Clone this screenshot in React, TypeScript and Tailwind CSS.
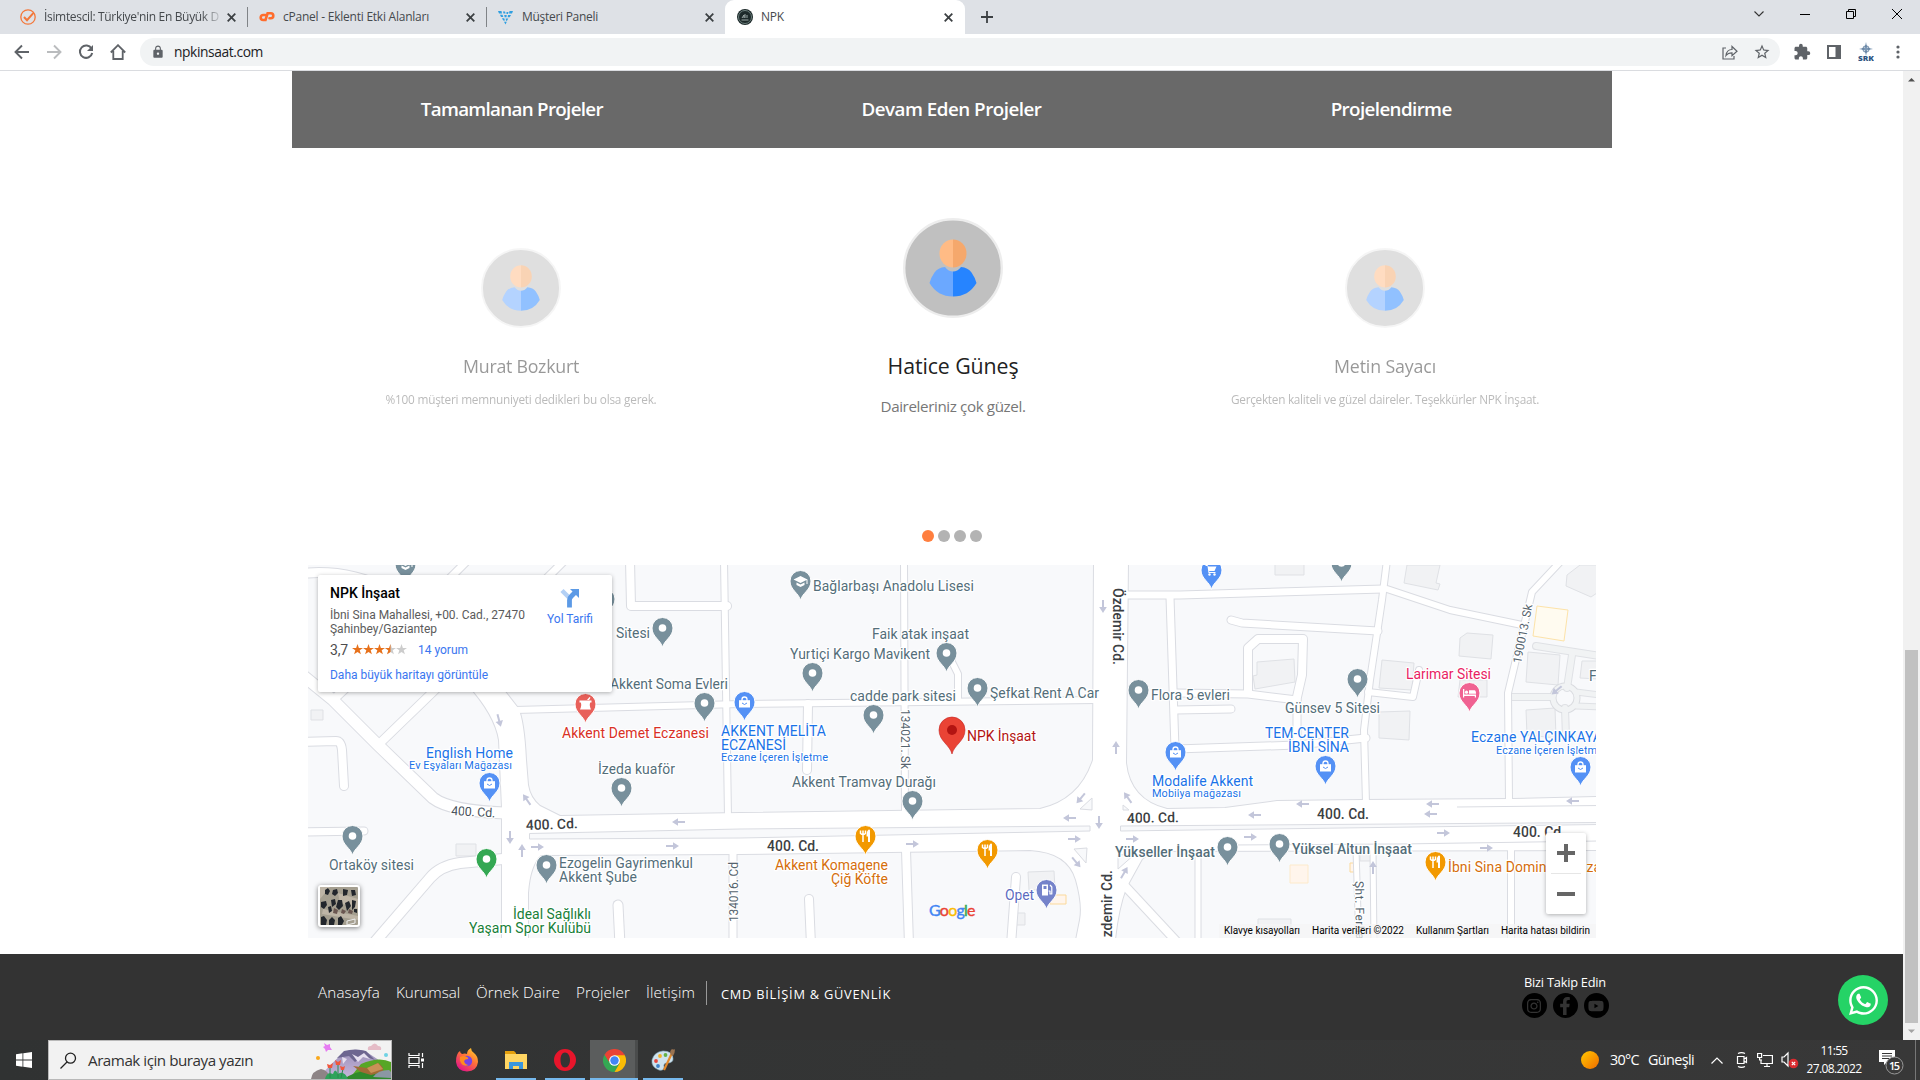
import React, { useLayoutEffect, useRef, useState } from "react";
import { FaWhatsapp, FaFacebookF, FaInstagram, FaYoutube } from "react-icons/fa";
import { MdExtension, MdLock, MdOutlineStarBorder } from "react-icons/md";

/* Text whose tracking is computed so that it fills the given width. */
function Fit({ w, className = "", children }: { w: number; className?: string; children: string }) {
  const ref = useRef<HTMLSpanElement>(null);
  const [ls, setLs] = useState(0);
  useLayoutEffect(() => {
    if (!ref.current) return;
    const natural = ref.current.getBoundingClientRect().width - ls * children.length;
    setLs((w - natural) / children.length);
  }, [w, children]);
  return (
    <span ref={ref} className={"inline-block whitespace-pre " + className} style={{ letterSpacing: ls + "px" }}>
      {children}
    </span>
  );
}

function CloseX() {
  return (
    <svg className="size-[9px] shrink-0" viewBox="0 0 9 9">
      <path d="M.7.7l7.600 7.600M8.300.7L.7 8.300" stroke="#3c4043" strokeWidth="1.800" />
    </svg>
  );
}

function TabStrip() {
  return (
    <div className="flex h-[34px] items-center bg-[#dee1e6] text-[12px] leading-[16px] text-[#45494d]">
      <div className="flex h-full w-[247px] items-center pl-5">
        <svg className="size-4 shrink-0" viewBox="0 0 16 16" fill="none" stroke="#f3773a">
          <circle cx="8" cy="8" r="7.2" strokeWidth="1.3" />
          <path d="M4 8l3 3.2 6.5-7.4" strokeWidth="2" />
        </svg>
        <div className="ml-2 w-[175px] overflow-hidden [mask-image:linear-gradient(to_right,black_90%,rgba(0,0,0,0.2))]">
          <Fit w={175} className="text-[12px]">İsimtescil: Türkiye'nin En Büyük D</Fit>
        </div>
        <div className="ml-2"><CloseX /></div>
      </div>
      <div className="h-5 w-px bg-[#808387]" />
      <div className="flex h-full w-[238px] items-center pl-[11px]">
        <svg className="size-4" viewBox="0 0 16 16" fill="none" stroke="#ff6c2c" strokeWidth="2.600" strokeLinecap="round">
          <path d="M6.300 6H4.200a2.400 2.400 0 0 0 0 5h2.300L8.600 4.300h3.200a2.400 2.400 0 0 1 0 5h-1.300" />
        </svg>
        <div className="ml-2 w-[183px]"><Fit w={146} className="text-[12px]">cPanel - Eklenti Etki Alanları</Fit></div>
        <CloseX />
      </div>
      <div className="h-5 w-px bg-[#808387]" />
      <div className="flex h-full w-[230px] items-center pl-[10px]">
        <svg className="size-[17px]" viewBox="0 0 17 17" fill="#2f9fe0">
          <path d="M1 2h3.500l.5 2.500H2zM6 2.500h2l.5 2H6.500zM9.500 3h2l-.5 2H9.500zM12.500 2H16l-1 2.500h-3zM3 5.700h2.500l.8 2.300H4zM7.200 6h2.500L9.500 8.200H7.700zM11 6h3l-1.300 2.300h-2zM5 9.200h2.200L8 11.500H6.200zM8.700 9.400h2.600L10 11.700H9zM7 12.700h2.800L8.500 15.500z" />
        </svg>
        <div className="ml-2 w-[183px]"><Fit w={76} className="text-[12px]">Müşteri Paneli</Fit></div>
        <CloseX />
      </div>
      <div className="ml-2 flex h-full w-[240px] items-center rounded-t-[9px] bg-white pl-3">
        <svg className="size-4" viewBox="0 0 16 16">
          <circle cx="8" cy="8" r="8" fill="#1d2a2a" />
          <circle cx="8" cy="8" r="6.500" fill="none" stroke="#6c7f7d" />
          <path d="M5 9l2-3v3M8 5v4M10 6v3M4.500 11h7" stroke="#a9b5b4" fill="none" strokeWidth=".9" />
        </svg>
        <div className="ml-2 w-[183px]"><Fit w={23} className="text-[12px]">NPK</Fit></div>
        <CloseX />
      </div>
      <svg className="ml-4 size-3" viewBox="0 0 12 12"><path d="M6 0v12M0 6h12" stroke="#3c4043" strokeWidth="1.8" /></svg>
      <div className="ml-auto flex items-center gap-9 pr-[18px] pb-1.5 text-black">
        <svg className="size-[10px]" viewBox="0 0 10 10"><path d="M.5 2.500L5 7l4.500-4.500" fill="none" stroke="#333" strokeWidth="1.1" /></svg>
        <svg className="size-[10px]" viewBox="0 0 10 10"><path d="M0 5.500h10" stroke="#000" /></svg>
        <svg className="size-[10px]" viewBox="0 0 10 10"><path d="M.5 2.500h7v7h-7zM2.500 2.500v-2h7v7h-2" fill="none" stroke="#000" /></svg>
        <svg className="size-[10px]" viewBox="0 0 10 10"><path d="M0 0l10 10M10 0L0 10" stroke="#000" /></svg>
      </div>
    </div>
  );
}

function Toolbar() {
  return (
    <div className="flex h-[37px] items-center border-b border-[#dadce0] bg-white">
      <div className="flex w-[140px] items-center gap-4 pl-3.5 text-[#5f6368]">
        <svg className="size-4" viewBox="0 0 16 16" fill="none" stroke="#5f6368" strokeWidth="1.9"><path d="M15 8H2M8 1.500L1.500 8 8 14.500" /></svg>
        <svg className="size-4" viewBox="0 0 16 16" fill="none" stroke="#babcbe" strokeWidth="1.9"><path d="M1 8h13M8 1.500L14.500 8 8 14.500" /></svg>
        <svg className="size-4" viewBox="0 0 16 16" fill="none" stroke="#5f6368" strokeWidth="2"><path d="M13.500 4.500A6.200 6.200 0 1 0 14.200 9" /><path d="M15 1v6H9z" fill="#5f6368" stroke="none" /></svg>
        <svg className="size-4" viewBox="0 0 16 16" fill="none" stroke="#5f6368" strokeWidth="1.8"><path d="M.8 8.500L8 1.200l7.200 7.300M3.300 7v8h9.400V7" /></svg>
      </div>
      <div className="flex h-7 w-[1640px] items-center rounded-full bg-[#f1f3f4] pl-[11px]">
        <MdLock className="size-[14px] text-[#5f6368]" />
        <div className="ml-[9px] pb-0.5 leading-5"><Fit w={89} className="text-[13.800px] text-[#202124]">npkinsaat.com</Fit></div>
        <div className="ml-auto flex items-center gap-[15px] pr-[9px] text-[#5f6368]">
          <svg className="size-4" viewBox="0 0 16 16" fill="none" stroke="#5f6368" strokeWidth="1.200"><path d="M4 4H1v11h11v-3" /><path d="M4 11.500c.5-4 2.500-6 6-6V2.500l5 4.700-5 4.500V8.800c-3 0-4.500.7-6 2.700z" /></svg>
          <MdOutlineStarBorder className="size-[18px]" />
        </div>
      </div>
      <div className="ml-[13px] flex items-center text-[#5f6368]">
        <MdExtension className="size-[18px]" />
        <svg className="ml-4 size-[14px]" viewBox="0 0 14 14"><path d="M0 0h14v14H0z" fill="#5f6368" /><path d="M2 2h6.500v10H2z" fill="#fff" /></svg>
        <svg className="ml-[17px] h-5 w-4" viewBox="0 0 16 20">
          <path d="M8 0l1.200 5.500L15 7 9.300 8.300 8 14 6.700 8.300 1 7l5.700-1.500z" fill="#7d98b5" />
          <circle cx="8" cy="7" r="3.200" fill="none" stroke="#4c6d90" strokeWidth=".8" />
          <text x="0" y="19.200" fontSize="6.500" fontWeight="800" textLength="16" lengthAdjust="spacingAndGlyphs" fill="#2d5482" fontFamily="Open Sans">SRK</text>
        </svg>
        <svg className="ml-[22px] h-[14px] w-1" viewBox="0 0 4 14" fill="#5f6368"><circle cx="2" cy="2" r="1.600" /><circle cx="2" cy="7" r="1.600" /><circle cx="2" cy="12" r="1.600" /></svg>
      </div>
    </div>
  );
}

function Avatar({ className }: { className: string }) {
  return (
    <svg className={className} viewBox="0 0 100 100">
      <circle cx="50" cy="50" r="48.800" fill="#c0c0c0" stroke="#ededed" strokeWidth="2.400" />
      <path d="M50 21.500a13.500 14 0 0 0 0 28z" fill="#ffbb85" />
      <path d="M50 21.500a13.500 14 0 0 1 0 28z" fill="#f5a86c" />
      <path d="M50 53.500q-4.500 0-8-4.500-7 .5-10.500 5.500T26.500 65q8 13.500 23.500 13.500z" fill="#6ba8ff" />
      <path d="M50 53.500q4.500 0 8-4.500 7 .5 10.500 5.500T73.500 65q-8 13.500-23.500 13.500z" fill="#2684ff" />
    </svg>
  );
}

function SideTestimonial({ name, nameW, text, textW }: { name: string; nameW: number; text: string; textW: number }) {
  return (
    <div className="flex flex-col items-center pt-[100px] opacity-50">
      <Avatar className="size-20" />
      <div className="mt-6 h-7 leading-7"><Fit w={nameW} className="text-[17.800px] font-medium text-[#333]">{name}</Fit></div>
      <div className="mt-2 h-5 leading-5"><Fit w={textW} className="text-[11.800px] text-[#777]">{text}</Fit></div>
    </div>
  );
}

function Testimonials() {
  return (
    <div className="ml-[305px] grid h-[373px] w-[1296px] grid-cols-3">
      <SideTestimonial name="Murat Bozkurt" nameW={116} text="%100 müşteri memnuniyeti dedikleri bu olsa gerek." textW={271} />
      <div className="flex flex-col items-center pt-[70px]">
        <Avatar className="size-[100px]" />
        <div className="mt-[34px] h-7 leading-7"><Fit w={131} className="text-[21.300px] text-[#222] font-medium">Hatice Güneş</Fit></div>
        <div className="mt-[14px] h-6 leading-6"><Fit w={145} className="text-[15.200px] text-[#777]">Daireleriniz çok güzel.</Fit></div>
      </div>
      <SideTestimonial name="Metin Sayacı" nameW={102} text="Gerçekten kaliteli ve güzel daireler. Teşekkürler NPK İnşaat." textW={308} />
    </div>
  );
}

type Road = [string, number];
const roads: Road[] = [
  ["M300 673L333 700L378 745L433 798Q450 811 505 813", 11],
  ["M378 745L437 688", 8],
  ["M333 700L350 684", 8],
  ["M300 742L336 741Q341 741 342 750L344 786", 8],
  ["M300 832L364 831", 7],
  ["M503 859L460 863Q440 866 430 878L374 943", 10],
  ["M618 905L620 945", 9],
  ["M515 710L740 704L1096 700", 6],
  ["M630 560L631 606L727 606", 8],
  ["M724 560L728 817", 6],
  ["M733 850L733 945", 7],
  ["M904 560L905 812", 6],
  ["M906 850L909 945", 8],
  ["M808 704L807 770", 8],
  ["M809 899L811 945", 8],
  ["M950 658L958 674L958 698", 6],
  ["M1016 877L1011 945", 8],
  ["M1126 595L1180 595L1383 589", 7],
  ["M1387 560L1382 600L1370 680L1364 730L1366 803", 6],
  ["M1387 589L1450 610L1522 625", 6],
  ["M1231 620L1242 623L1378 631", 7],
  ["M1248 692L1248 648L1258 639L1303 639L1302 675L1297 697", 8],
  ["M1176 693L1248 694L1297 700", 7],
  ["M1297 700L1297 745", 7],
  ["M1176 749L1297 745L1366 738", 7],
  ["M1176 710L1231 709", 7],
  ["M1368 692L1413 697L1419 670", 6],
  ["M1170 597L1175 749", 7],
  ["M1562 560L1532 592L1508 693L1509 800", 6],
  ["M1511 850L1511 945", 6],
  ["M1373 850L1374 945", 5],
  ["M1356 850L1359 945", 5],
  ["M1198 850L1198 945", 5],
  ["M1125 886L1178 943", 8],
  ["M468 560L445 583", 7],
  ["M565 560L545 580", 7],
  ["M308 573Q350 570 390 590", 9],
];
const bigArea =
  "M468 685Q495 715 499 740L502 808L502 940L528 940L528 893Q530 865 541 855L740 854L1030 850Q1068 852 1076 880Q1083 905 1080 920L1076 940L1115 940Q1118 910 1126 888L1142 859Q1150 852 1160 851L1600 850L1600 797L1513 799L1363 800L1277 801L1225 808L1167 809Q1130 800 1126 763L1128 560L1094 560L1093 760Q1080 800 1040 809L740 813L560 816L540 806Q530 798 528 785L526 760Q524 720 518 708L500 685Z";
const buildings = [
  "311 710h12v10h-12z", "456 844h20v12h-20z", "1275 560h29v15h-29z", "1407 565l-3 18 34 7 2-6-4-1 4-18z",
  "1257 662l37-3 1 23-40 7-2-13 4-1z", "1382 660l32 3-2 27-33-2z", "1379 712l31-1-1 29-30-2z", "1460 638l7-5 26 2-2 24-32-3z",
  "1460 680h27v17h-29z", "1528 652l32 3-2 30-32-3z", "1526 710l29-2 1 30-29-3z", "1567 575l13-10h17v28l-6 4-25-11z",
  "1028 872l26-1 1 18-26 1z", "1015 913h10v12h-10z", "1258 919h33v8h-33z", "1582 661h16v18l-18-1z", "1360 852h11v9h-11z",
];
const minor: Road[] = [
  ["M1536 646L1600 656", 6], ["M1572 655L1567 688", 6], ["M1512 697L1552 697", 6], ["M1576 692L1600 695M1576 706L1600 707", 5], ["M1565 708L1566 738", 6],
];

const arrows: [number, number, number][] = [
  [499, 720, 75], [527, 800, 235], [510, 837, 90], [522, 851, 270], [537, 847, 0], [672, 846, 0], [679, 822, 180],
  [912, 844, 0], [1070, 818, 180], [1074, 839, 0], [1081, 798, 130], [1099, 822, 90], [1128, 798, 235], [1132, 839, 0],
  [1076, 862, 50], [1124, 873, 300], [1103, 606, 90], [1116, 748, 270], [1303, 804, 180], [1255, 815, 180], [1433, 804, 180],
  [1431, 814, 180], [1573, 801, 180], [1250, 837, 0], [1443, 833, 0], [1486, 848, 0], [1373, 868, 270], [1557, 690, 140],
];

const GREY = "#78909c";
type PinKind = "dot" | "bag" | "food" | "cart" | "school" | "gas" | "bed" | "pharm";
const pins: [number, number, string, PinKind][] = [
  [405, 564, GREY, "school"], [604, 599, GREY, "dot"], [662, 628, GREY, "dot"], [704, 703, GREY, "dot"], [585, 704, "#e8605a", "pharm"],
  [489, 783, "#5491f5", "bag"], [621, 788, GREY, "dot"], [352, 836, GREY, "dot"], [486, 859, "#34a853", "dot"], [546, 865, GREY, "dot"],
  [800, 581, GREY, "school"], [946, 653, GREY, "dot"], [812, 673, GREY, "dot"], [977, 688, GREY, "dot"], [744, 702, "#5491f5", "bag"],
  [873, 715, GREY, "dot"], [912, 801, GREY, "dot"], [865, 836, "#f29900", "food"], [987, 850, "#f29900", "food"], [1046, 890, "#7583ca", "gas"],
  [1138, 690, GREY, "dot"], [1175, 752, "#5491f5", "bag"], [1211, 570, "#5491f5", "cart"], [1341, 563, GREY, "dot"], [1357, 679, GREY, "dot"],
  [1469, 693, "#f06292", "bed"], [1325, 766, "#5491f5", "bag"], [1580, 767, "#5491f5", "bag"], [1227, 847, GREY, "dot"], [1279, 844, GREY, "dot"],
  [1435, 862, "#f29900", "food"],
];

function PinGlyph({ kind }: { kind: PinKind }) {
  switch (kind) {
    case "bag":
      return <g><path d="M-5.500-1.800H5.500V5.500H-5.500z" fill="#fff" /><path d="M-2.500-1v-1.500a2.500 2.500 0 0 1 5 0V-1" fill="none" stroke="#fff" strokeWidth="1.300" /><path d="M-2.500 1q2.500 3 5 0" fill="none" stroke="#5491f5" /></g>;
    case "food":
      return <g stroke="#fff" fill="none" strokeWidth="1.500"><path d="M-2.500-5.500V6M-5-5.500v3q2.500 2 5 0v-3" /><path d="M3.500 6V-5.500q-1.500 1-1.500 6" strokeWidth="2" /></g>;
    case "cart":
      return <g fill="#fff"><path d="M-6-5h2l1 1.500h8L3 1H-2.500L-2 2H4v1H-3L-4-4h-2z" /><circle cx="-2" cy="4.500" r="1.200" /><circle cx="3" cy="4.500" r="1.200" /></g>;
    case "school":
      return <g fill="#fff"><path d="M0-5L7-1.500V3H6V-1L0 2-7-1.500z" /><path d="M-4 1.500L0 3.500 4 1.500V4L0 6-4 4z" /></g>;
    case "gas":
      return <g><path d="M-4.500-5.500h6v11h-6z" fill="#fff" /><path d="M-3-4h3v3h-3z" fill="#7583ca" /><path d="M2 1h1.500v3h1.800V-3L3.500-5" stroke="#fff" fill="none" strokeWidth="1.200" /></g>;
    case "bed":
      return <g fill="#fff"><path d="M-6.500-4h1.300V1.500H6.500V4.500H5.300V3H-5.300V4.500h-1.200z" /><circle cx="-3" cy="-.8" r="1.600" /><path d="M-.5-2.800H5q1.500 0 1.500 3.500h-7z" /></g>;
    case "pharm":
      return <g fill="#fff"><path d="M-6-3.500H6V-1.500H4.700Q3.500 1 5.500 5.500h-11Q-3.500 1-4.700-1.500H-6z" /><path d="M1.500-4L4-7l1 .8L3.500-4z" /></g>;
    default:
      return <circle r="3.800" fill="#fff" />;
  }
}

const SLATE = "#546e7a";
const BLUE = "#1a73e8";
/* text, x, baseline, width, colour, size, rotation */
const labels: [string, number, number, number, string, number, number?][] = [
  ["Sitesi", 616, 638, 34, SLATE, 14],
  ["Akkent Soma Evleri", 610, 689, 118, SLATE, 14],
  ["Akkent Demet Eczanesi", 562, 738, 147, "#d93025", 14],
  ["English Home", 426, 758, 87, BLUE, 14],
  ["Ev Eşyaları Mağazası", 409, 769, 103, BLUE, 11],
  ["İzeda kuaför", 598, 774, 77, SLATE, 14],
  ["Ortaköy sitesi", 329, 870, 85, SLATE, 14],
  ["Ezogelin Gayrimenkul", 559, 868, 134, SLATE, 14],
  ["Akkent Şube", 559, 882, 78, SLATE, 14],
  ["İdeal Sağlıklı", 513, 919, 78, "#188038", 14],
  ["Yaşam Spor Kulübü", 469, 933, 122, "#188038", 14],
  ["AKKENT MELİTA", 721, 736, 105, BLUE, 14],
  ["ECZANESİ", 721, 750, 65, BLUE, 14],
  ["Eczane İçeren İşletme", 721, 761, 107, BLUE, 11],
  ["Bağlarbaşı Anadolu Lisesi", 813, 591, 161, SLATE, 14],
  ["Faik atak inşaat", 872, 639, 97, SLATE, 14],
  ["Yurtiçi Kargo Mavikent", 790, 659, 140, SLATE, 14],
  ["cadde park sitesi", 850, 701, 106, SLATE, 14],
  ["Şefkat Rent A Car", 990, 698, 109, SLATE, 14],
  ["NPK İnşaat", 967, 741, 69, "#b31412", 14],
  ["Akkent Tramvay Durağı", 792, 787, 144, SLATE, 14],
  ["Akkent Komagene", 775, 870, 113, "#d56e0c", 14],
  ["Çiğ Köfte", 831, 884, 57, "#d56e0c", 14],
  ["Opet", 1005, 900, 29, "#5c6bc0", 14],
  ["Flora 5 evleri", 1151, 700, 79, SLATE, 14],
  ["Modalife Akkent", 1152, 786, 101, BLUE, 14],
  ["Mobilya mağazası", 1152, 797, 89, BLUE, 11],
  ["Günsev 5 Sitesi", 1285, 713, 95, SLATE, 14],
  ["TEM-CENTER", 1265, 738, 84, BLUE, 14],
  ["İBNİ SİNA", 1288, 752, 61, BLUE, 14],
  ["Larimar Sitesi", 1406, 679, 85, "#e91e63", 14],
  ["Eczane YALÇINKAYA", 1471, 742, 131, BLUE, 14],
  ["Eczane İçeren İşletme", 1496, 754, 107, BLUE, 11],
  ["F", 1589, 681, 8, SLATE, 14],
  ["Yükseller İnşaat", 1115, 857, 100, SLATE, 14],
  ["Yüksel Altun İnşaat", 1292, 854, 120, SLATE, 14],
  ["İbni Sina Domino's", 1448, 872, 115, "#d56e0c", 14],
  ["Pizza", 1568, 872, 33, "#d56e0c", 14],
  ["400. Cd.", 451, 815, 44, "#47515b", 12.5, 3],
  ["400. Cd.", 526, 830, 52, "#3c4043", 14, -2],
  ["400. Cd.", 767, 851, 52, "#3c4043", 14],
  ["400. Cd.", 1127, 823, 52, "#3c4043", 14, -1],
  ["400. Cd.", 1317, 819, 52, "#3c4043", 14],
  ["400. Cd.", 1513, 837, 52, "#3c4043", 14],
  ["Özdemir Cd.", 1113, 588, 77, "#3c4043", 14, 90],
  ["Özdemir Cd.", 1112, 947, 77, "#3c4043", 14, -90],
  ["134021. Sk", 901, 709, 60, "#56646e", 12, 90],
  ["134016. Cd", 738, 922, 60, "#56646e", 12, -90],
  ["190013. Sk", 1521, 664, 60, "#56646e", 12, -79],
  ["Şht. Ferhat", 1355, 881, 63, "#56646e", 12, 89],
];

function MapCanvas() {
  return (
    <svg className="block h-[373px] w-[1288px]" viewBox="308 565 1288 373" fill="none" strokeLinejoin="round" fontFamily="Roboto">
      <rect x="308" y="565" width="1288" height="373" fill="#f8f9fb" />
      {buildings.map((b) => <path key={b} d={"M" + b} fill="#f1f2f4" stroke="#dfe1e5" />)}
      <path d="M1537 606l31 4-4 31-31-5z" fill="#fffbf0" stroke="#fde3a9" />
      <path d="M1290 865h18v18h-18z" fill="#fff5ec" stroke="#fdeacb" />
      <path d="M1350 863h9v9h-9zM1051 895h15v9h-16z" fill="#fff5ec" stroke="#fbd99b" />
      {minor.map(([d, w]) => <path key={d} d={d} stroke="#dfe1e5" strokeWidth={w + 2} strokeLinecap="round" />)}
      <circle cx="1565" cy="698" r="12" stroke="#dadce0" strokeWidth="7" />
      {minor.map(([d, w]) => <path key={d} d={d} stroke="#f1f3f4" strokeWidth={w} strokeLinecap="round" />)}
      <circle cx="1565" cy="698" r="12" stroke="#f1f3f4" strokeWidth="5" />
      {roads.map(([d, w]) => <path key={d} d={d} stroke="#dadce2" strokeWidth={w + 2} strokeLinecap="round" />)}
      <path d={bigArea} stroke="#dadce2" strokeWidth="2" />
      {roads.map(([d, w]) => <path key={d} d={d} stroke="#fff" strokeWidth={w} strokeLinecap="round" />)}
      <path d={bigArea} fill="#fff" />
      <g fill="#f8f9fb" stroke="#dadce2">
        <path d="M529.500 833.500L740 829l350-3v5l-350 7-210.500 1z" />
        <path d="M1120.500 826L1600 822.500v2L1120.500 831z" />
        <path d="M1080 809l12-11v12zM1074 849l13-1-1 15zM1123 805l6 5h-6zM1118 869l0-14 17-1z" />
        <path d="M1457 807L1600 805.500M1230 845L1400 844L1600 841" />
      </g>
      {arrows.map(([x, y, r]) => (
        <path key={x + "-" + y} d="M-6 0H3" stroke="#c3c6da" strokeWidth="2" transform={`translate(${x} ${y}) rotate(${r})`} />
      ))}
      {arrows.map(([x, y, r]) => (
        <path key={x + "-" + y} d="M1-3.800L7 0L1 3.800z" fill="#c3c6da" transform={`translate(${x} ${y}) rotate(${r})`} />
      ))}
      {labels.map(([t, x, y, w, c, s, r]) => (
        <text
          key={t + x}
          x={0}
          y={0}
          transform={`translate(${x} ${y}) rotate(${r ?? 0})`}
          fill={c}
          fontSize={s}
          textLength={w}
          stroke="#fff"
          strokeWidth="2.500"
          fontWeight={(t.endsWith("Cd.") && s === 14) || t.startsWith("Yüksel") ? 500 : 400}
          className="[paint-order:stroke]"
        >
          {t}
        </text>
      ))}
      {pins.map(([x, y, c, k]) => (
        <g key={x + "-" + y} transform={`translate(${x + 0.5} ${y})`}>
          <path d="M0 19.500C-1.500 12-10.500 9-10.500 0A10.500 10.500 0 1 1 10.500 0C10.500 9 1.500 12 0 19.500z" fill={c} stroke="#fff" strokeWidth="1" />
          <PinGlyph kind={k} />
        </g>
      ))}
      <g transform="translate(952 730)">
        <path d="M0 24C-2 15-13 11-13 0A13 13 0 1 1 13 0C13 11 2 15 0 24z" fill="#ea4335" stroke="#c5221f" strokeWidth=".6" />
        <circle r="5" fill="#b31412" />
      </g>
    </svg>
  );
}

const star = "M6 0l1.500 4.200H12L8.400 6.900 9.700 11.200 6 8.600 2.300 11.200 3.600 6.900 0 4.200h4.500z";

function MapCard() {
  return (
    <div className="absolute top-[10px] left-[10px] flex h-[117px] w-[294px] rounded-[2px] bg-white pt-[9px] pl-3 font-[Roboto] text-[12px] shadow-[0_1px_4px_rgba(0,0,0,0.3)]">
      <div className="w-[210px]">
        <div className="leading-[18px]"><Fit w={70} className="text-[14px] font-medium text-black">NPK İnşaat</Fit></div>
        <div className="mt-[5px] leading-[14px] text-[#5b5b5b]">
          <Fit w={195}>İbni Sina Mahallesi, +00. Cad., 27470</Fit>
          <Fit w={107} className="block w-fit">Şahinbey/Gaziantep</Fit>
        </div>
        <div className="mt-[6px] flex items-center leading-[16px]">
          <Fit w={18} className="text-[14px] text-[#4d4d4d]">3,7</Fit>
          <svg className="ml-1 h-[12px] w-[55px]" viewBox="0 0 60 13">
            {[0, 12, 24, 36, 48].map((x) => <path key={x} d={star} transform={`translate(${x} 0)`} fill={x < 36 ? "#e7711b" : "#ccc"} />)}
            <path d="M42 0v8.600L38.300 11.200 39.600 6.900 36 4.200h4.500z" fill="#e7711b" />
          </svg>
          <Fit w={50} className="ml-[11px] text-[#3a76f0]">14 yorum</Fit>
        </div>
        <div className="mt-[9px] leading-[16px]"><Fit w={158} className="text-[#3a76f0]">Daha büyük haritayı görüntüle</Fit></div>
      </div>
      <div className="flex w-[60px] flex-col items-center pt-[4px]">
        <svg className="size-5" viewBox="0 0 20 20" fill="none">
          <path d="M2 2.500L9 9.500" stroke="#b3d0f5" strokeWidth="4.500" />
          <path d="M9.500 19.500V12q0-2 2-4l4-4" stroke="#5c9ae6" strokeWidth="4.800" />
          <path d="M10 1h9v9z" fill="#5c9ae6" />
        </svg>
        <Fit w={46} className="mt-[4px] leading-[14px] text-[#3a76f0]">Yol Tarifi</Fit>
      </div>
    </div>
  );
}

function MapPanel() {
  return (
    <div className="relative ml-[308px] h-[373px] w-[1288px] overflow-hidden">
      <MapCanvas />
      <MapCard />
      <svg className="absolute top-[320px] left-[10px] size-[42px] rounded-[3px] border-2 border-white bg-[#a59f90] shadow-[0_1px_5px_rgba(0,0,0,0.5)]" viewBox="0 0 38 38">
        <path d="M0 0L10 0L0 12zM18 6L38 12V22L20 16zM3 22L38 29V33L2 27z" fill="#beb5a6" />
        <path d="M5 3l3-2 2 3-2 4-3-1zM13 3l4-1 1 4-3 3-3-2zM23 2l5 1-1 5-4 1zM31 3l4 0 1 5-4 1zM1 15l5-1 1 4-3 4-3-2zM8 20l3-1 1 5-3 2zM11 13l4-1 1 5-4 3zM18 13l4 0 1 6-4 4-3-3zM25 16l4-2 2 5-4 5zM32 13l4 1-1 6-3 3zM34 22l3 0 0 4-3-1zM1 30l3-1 3 4-1 5-5 0zM9 33l3-3 3 3-1 5-5 0zM18 31l3-2 3 5-2 4-4 0z" fill="#22262c" />
        <path d="M14 21l4 2-1 4-4-1zM22 22l4 2-2 3-3-1zM29 22l4 2-1 3-4-1z" fill="#6b5751" />
        <path d="M27 34l8-2v4l-8 2z" stroke="#eee" fill="none" />
      </svg>
      <svg className="absolute top-[337px] left-[620px] h-5 w-[52px]" viewBox="0 0 52 20" fontFamily="Lato" fontSize="16" fontWeight="400" strokeWidth=".4">
        <text x="1" y="13.500" textLength="46.500">
          <tspan fill="#4285f4" stroke="#4285f4">G</tspan><tspan fill="#ea4335" stroke="#ea4335">o</tspan><tspan fill="#fbbc04" stroke="#fbbc04">o</tspan><tspan fill="#4285f4" stroke="#4285f4">g</tspan><tspan fill="#34a853" stroke="#34a853">l</tspan><tspan fill="#ea4335" stroke="#ea4335">e</tspan>
        </text>
      </svg>
      <div className="absolute top-[268px] left-[1238px] flex h-[81px] w-10 flex-col items-center rounded-[2px] bg-white shadow-[0_1px_4px_rgba(0,0,0,0.3)]">
        <svg className="size-[18px] mt-[11px]" viewBox="0 0 18 18"><path d="M9 0v18M0 9h18" stroke="#666" strokeWidth="4" /></svg>
        <div className="mt-[11px] h-px w-[30px] bg-[#e6e6e6]" />
        <svg className="mt-[11px] size-[18px]" viewBox="0 0 18 18"><path d="M0 9h18" stroke="#666" strokeWidth="4" /></svg>
      </div>
      <div className="absolute right-0 bottom-0 flex h-[14px] items-center bg-[#f5f5f5]/70 pr-[6px] pl-[5px] font-[Roboto] text-[10px] leading-[14px] text-black">
        <Fit w={76}>Klavye kısayolları</Fit>
        <Fit w={92} className="ml-3">Harita verileri ©2022</Fit>
        <Fit w={73} className="ml-3">Kullanım Şartları</Fit>
        <Fit w={89} className="ml-3">Harita hatası bildirin</Fit>
      </div>
    </div>
  );
}

function Footer() {
  return (
    <div className="mt-4 flex h-[86px] items-start bg-[#333] text-white">
      <div className="ml-[318px] flex items-start gap-4 pt-[26px] text-[15.200px] leading-[24px] font-[350]">
        <Fit w={62}>Anasayfa</Fit>
        <Fit w={64}>Kurumsal</Fit>
        <Fit w={84}>Örnek Daire</Fit>
        <Fit w={54}>Projeler</Fit>
        <Fit w={49}>İletişim</Fit>
      </div>
      <div className="mt-[27px] ml-[11px] h-6 border-l border-[#999] pt-px pl-[14px] leading-[22px]">
        <Fit w={170} className="text-[12.800px]">CMD BİLİŞİM &amp; GÜVENLİK</Fit>
      </div>
      <div className="ml-auto flex w-[88px] flex-col items-center pt-[18px]">
        <Fit w={82} className="text-[12.800px] leading-[20px]">Bizi Takip Edin</Fit>
        <div className="mt-px flex gap-[6px] text-[#333]">
          <div className="flex size-[25px] items-center justify-center rounded-full bg-black"><FaInstagram className="size-4" /></div>
          <div className="flex size-[25px] items-center justify-center rounded-full bg-black"><FaFacebookF className="size-[18px]" /></div>
          <div className="flex size-[25px] items-center justify-center rounded-full bg-black"><FaYoutube className="size-4" /></div>
        </div>
      </div>
      <div className="mt-[21px] mr-[15px] ml-[229px] flex size-[50px] items-center justify-center rounded-full bg-[#25d366]">
        <FaWhatsapp className="size-[33px]" />
      </div>
    </div>
  );
}

function Scrollbar() {
  return (
    <div className="flex h-full w-[17px] flex-col items-center bg-[#f1f1f1]">
      <svg className="h-[17px] w-[17px] shrink-0" viewBox="0 0 17 17"><path d="M5 10.500L8.500 7l3.500 3.500z" fill="#505050" /></svg>
      <div className="mt-[562px] h-[373px] w-[13px] bg-[#c1c1c1]" />
      <svg className="h-[17px] w-[17px] shrink-0" viewBox="0 0 17 17"><path d="M5 6.500L8.500 10 12 6.500z" fill="#a3a3a3" /></svg>
    </div>
  );
}

function SearchArt() {
  return (
    <svg className="h-[38px] w-[80px]" viewBox="312 1041 80 38">
      <defs>
        <linearGradient id="hill" x1="0" x2="0" y1="0" y2="1"><stop offset="0" stopColor="#9a8fb8" /><stop offset="1" stopColor="#c8b7dc" /></linearGradient>
      </defs>
      <path d="M318 1079Q334 1062 345 1052Q356 1048 366 1051L392 1068V1079z" fill="url(#hill)" />
      <path d="M338 1058L345 1051Q356 1048 367 1051L376 1060L364 1056L356 1062L350 1056z" fill="#6d6690" />
      <path d="M343 1057l5 2-4 5zM353 1054l6 3 6-4 6 6-7-2-5 5z" fill="#e6e0f0" />
      <path d="M362 1064Q380 1056 392 1062V1079H350z" fill="#57a626" />
      <path d="M345 1079Q360 1068 378 1072L392 1073V1079z" fill="#2f8a2b" />
      <path d="M312 1079Q313 1071 322 1069Q329 1070 332 1079z" fill="#8d8486" />
      <path d="M354 1066l14 2 11-5q6 3 5 9l-12 3-10-3z" fill="#a06b35" />
      <path d="M368 1068l11-5 5 6-12 4z" fill="#c99157" />
      <path d="M374 1077q5-7 16-7l2 2v6z" fill="#8b97a3" />
      <path d="M326 1079q2-8 8-5 2-7 5 0 6-4 10 5z" fill="#2ea35a" />
      <path d="M331 1066v12M339 1063v15M344 1069l-2 9" stroke="#2a8a4c" />
      <path d="M328 1064l3 1 3-2-1 5h-4zM336 1060l3 2 3-2-1 5h-4zM341 1066l3 1 2-1-1 4h-3z" fill="#f0563c" />
      <path d="M325 1043l3 2 3-1 0 3 2 3-4 0-2 2-1-3-2-2 2-1z" fill="#e67bf2" />
      <circle cx="319" cy="1058" r="2" fill="#f9a81b" /><circle cx="387" cy="1055" r="2" fill="#6fd3e4" />
      <path d="M369 1050q-1-4 3-4 4-5 7 0 4 0 3 4z" fill="#e5bcc7" />
    </svg>
  );
}

function Taskbar() {
  return (
    <div className="flex h-10 items-center bg-linear-to-r from-[#303232] to-[#383838] text-white">
      <div className="flex w-12 justify-center">
        <svg className="size-4" viewBox="0 0 16 16" fill="#fff"><path d="M0 2.200L6.500 1.300V7.500H0zM7.300 1.200L16 0V7.500H7.300zM0 8.400H6.500V14.700L0 13.800zM7.300 8.400H16V16L7.300 14.800z" /></svg>
      </div>
      <div className="flex h-10 w-[344px] items-center border border-[#b9b9b9] bg-[#f2f2f2] pl-[11px]">
        <svg className="size-[17px]" viewBox="0 0 17 17" fill="none" stroke="#222" strokeWidth="1.300"><circle cx="10.500" cy="6.200" r="5" /><path d="M7 10L.5 16.500" /></svg>
        <div className="ml-[11px] w-[175px]"><Fit w={165} className="text-[15.200px] leading-5 text-[#333]">Aramak için buraya yazın</Fit></div>
        <div className="ml-auto"><SearchArt /></div>
      </div>
      <div className="flex w-[50px] justify-center pr-0.5">
        <svg className="size-[17px]" viewBox="0 0 17 17" fill="none" stroke="#fff" strokeWidth="1.200"><path d="M1 1v2.500h10V1M1 16v-2.500h10V16M1 5.500h10v6H1zM14.500 1v4M14.500 11v5" /><path d="M13 6.500h3v3h-3z" fill="#fff" stroke="none" /></svg>
      </div>
      <div className="flex w-[50px] justify-center">
        <svg className="size-6" viewBox="0 0 24 24">
          <defs><linearGradient id="fx" x1="1" y1="0" x2="0.300" y2="1"><stop offset="0" stopColor="#ffe226" /><stop offset=".5" stopColor="#ff7139" /><stop offset="1" stopColor="#e31587" /></linearGradient></defs>
          <path d="M2 7Q3 4 5 3q0 2 2 3 3-1 5 0Q12 2 16 0q0 3 3 5 4 3 4 9-1 9-11 9.500Q2 23 1 14 .8 10 2 7z" fill="url(#fx)" />
          <circle cx="12" cy="13" r="5.200" fill="#7542e5" />
          <path d="M5 9q4-2 7 0 2 1 1 2-3 0-4 2 1 4 5 4-6 2-8-2-2-3-1-6z" fill="#ff8a1f" />
        </svg>
      </div>
      <div className="ml-[4px] flex h-10 w-10 flex-col items-center border-b-2 border-[#76b9ed] pt-[11px]">
        <svg className="h-[19px] w-[22px]" viewBox="0 0 22 19"><path d="M0 0h9l2 2v4H0z" fill="#e5a00d" /><path d="M0 3h22v15H0z" fill="#ffd562" /><path d="M4 18v-7h14v7h-4v-3h-6v3z" fill="#3a96dd" /></svg>
      </div>
      <div className="ml-[9px] flex h-10 w-10 flex-col items-center border-b-2 border-[#76b9ed] pt-[9px]">
        <svg className="size-[22px]" viewBox="0 0 22 22"><path fillRule="evenodd" d="M11 0a11 11 0 1 0 0 22 11 11 0 1 0 0-22zM11 3.500c3 0 5 3.300 5 7.500s-2 7.500-5 7.500S6.500 15.200 6.500 11 8 3.500 11 3.500z" fill="#e8152b" /></svg>
      </div>
      <div className="ml-[5px] flex h-10 w-[45px] flex-col items-center border-b-2 border-[#76b9ed] bg-[#5b5d5d] pt-[9px] pl-[3px]">
        <svg className="size-[23px]" viewBox="0 0 24 24">
          <path d="M12 12L1.600 6A12 12 0 0 1 22.400 6z" fill="#ea4335" />
          <path d="M1.600 6A12 12 0 0 0 12 24L17.200 15 12 12z" fill="#34a853" />
          <path d="M22.400 6H12l5.200 9L12 24A12 12 0 0 0 22.400 6z" fill="#fbbc05" />
          <path d="M1.600 6L6.800 15 12 12V6z" fill="#34a853" /><path d="M1.600 6L6 13 12 6.500H22.700L22.400 6 12 0z" fill="#ea4335" />
          <circle cx="12" cy="12" r="5.600" fill="#fff" /><circle cx="12" cy="12" r="4.400" fill="#4285f4" />
        </svg>
      </div>
      <div className="h-10 w-[3px] border-b-2 border-[#76b9ed] bg-[#4a4c4c]" />
      <div className="ml-[5px] flex h-10 w-10 flex-col items-center border-b-2 border-[#76b9ed] pt-[8px]">
        <svg className="size-6" viewBox="0 0 24 24">
          <path d="M12 3Q22 3 22 11q0 4-6 4-4 0-3 4 0 4-5 3Q0 19 1 12 3 4 12 3z" fill="#cfe3ee" stroke="#8db3c8" strokeWidth=".6" />
          <circle cx="5" cy="13" r="1.900" fill="#e8463c" /><circle cx="9" cy="8" r="1.900" fill="#f4b227" /><circle cx="14.500" cy="7" r="1.900" fill="#63b246" /><circle cx="7" cy="18" r="1.900" fill="#3e82c9" />
          <path d="M21 5L13 22" stroke="#e2892c" strokeWidth="2.200" /><path d="M20 7q-2-4 1-6 2 1 3 0 0 4-2 7z" fill="#9a7350" />
        </svg>
      </div>
      <div className="ml-auto flex items-center">
        <div className="size-[18px] rounded-full bg-linear-to-br from-[#ffc800] to-[#ee6a00]" />
        <Fit w={29} className="ml-[11px] text-[14.400px] leading-5">30°C</Fit>
        <Fit w={46} className="ml-[9px] text-[14.400px] leading-5">Güneşli</Fit>
        <svg className="ml-[17px] h-[7px] w-3" viewBox="0 0 12 7" fill="none" stroke="#fff" strokeWidth="1.200"><path d="M.5 6.500L6 1l5.500 5.500" /></svg>
        <svg className="ml-[11px] size-4" viewBox="0 0 16 16" fill="none" stroke="#fff" strokeWidth="1.200"><path d="M4 1.500Q7.500-.3 11 1.500M4 14.500Q7.500 16.300 11 14.500M3.500 4.500h6.500v7H3.500zM10 7l2.500-1.500v5L10 9" /></svg>
        <svg className="ml-[7px] size-4" viewBox="0 0 16 16" fill="none" stroke="#fff" strokeWidth="1.200"><path d="M6 3.500h9.400v8H4V8M7 14.500h6M10 11.500v3M.6 1.500h4v4h-4zM2.600 5.500V8H5" /></svg>
        <svg className="ml-[8px] size-[18px]" viewBox="0 0 18 18" fill="none" stroke="#fff" strokeWidth="1.200"><path d="M1 6v5h2l4 4V2L3 6z" /><circle cx="12.500" cy="12.500" r="4.800" fill="#d92b2f" stroke="none" /><path d="M10.800 10.800l3.400 3.400M14.200 10.800l-3.400 3.400" /></svg>
        <div className="ml-[7px] flex w-[56px] flex-col items-center text-[12px] leading-[18px]">
          <Fit w={27}>11:55</Fit>
          <Fit w={55}>27.08.2022</Fit>
        </div>
        <svg className="ml-[17px] mt-1 h-[26px] w-[26px]" viewBox="0 0 26 26">
          <path d="M0 1h16v12H8l-3 3v-3H0z" fill="#fff" /><path d="M3 4.500h10M3 7h10M3 9.500h7" stroke="#383838" />
          <circle cx="15.500" cy="16.500" r="8.500" fill="#3a3a3a" stroke="#999" />
          <text x="10" y="20.500" textLength="11" fontSize="11" fontWeight="600" fill="#fff" fontFamily="Open Sans">15</text>
        </svg>
        <div className="mr-1 ml-[10px] h-10 w-px bg-[#777]" />
      </div>
    </div>
  );
}

export default function App() {
  return (
    <div className="h-[1080px] w-[1920px] overflow-hidden bg-white font-['Open_Sans','Noto_Sans',sans-serif]">
      <TabStrip />
      <Toolbar />
      <div className="flex h-[969px]">
        <div className="w-[1903px]">
          <div className="ml-[292px] grid h-[77px] w-[1320px] grid-cols-3 items-center justify-items-center bg-[#696969] pr-px pb-px text-[18.800px] leading-7 font-semibold text-white">
            <Fit w={182}>Tamamlanan Projeler</Fit>
            <Fit w={180}>Devam Eden Projeler</Fit>
            <Fit w={121}>Projelendirme</Fit>
          </div>
          <Testimonials />
          <div className="mb-[23px] ml-[922px] flex h-[21px] items-end gap-1">
            <div className="size-3 rounded-full bg-[#ff7f3f]" />
            <div className="size-3 rounded-full bg-[#b3b3b3]" />
            <div className="size-3 rounded-full bg-[#b3b3b3]" />
            <div className="size-3 rounded-full bg-[#b3b3b3]" />
          </div>
          <MapPanel />
          <Footer />
        </div>
        <Scrollbar />
      </div>
      <Taskbar />
    </div>
  );
}
